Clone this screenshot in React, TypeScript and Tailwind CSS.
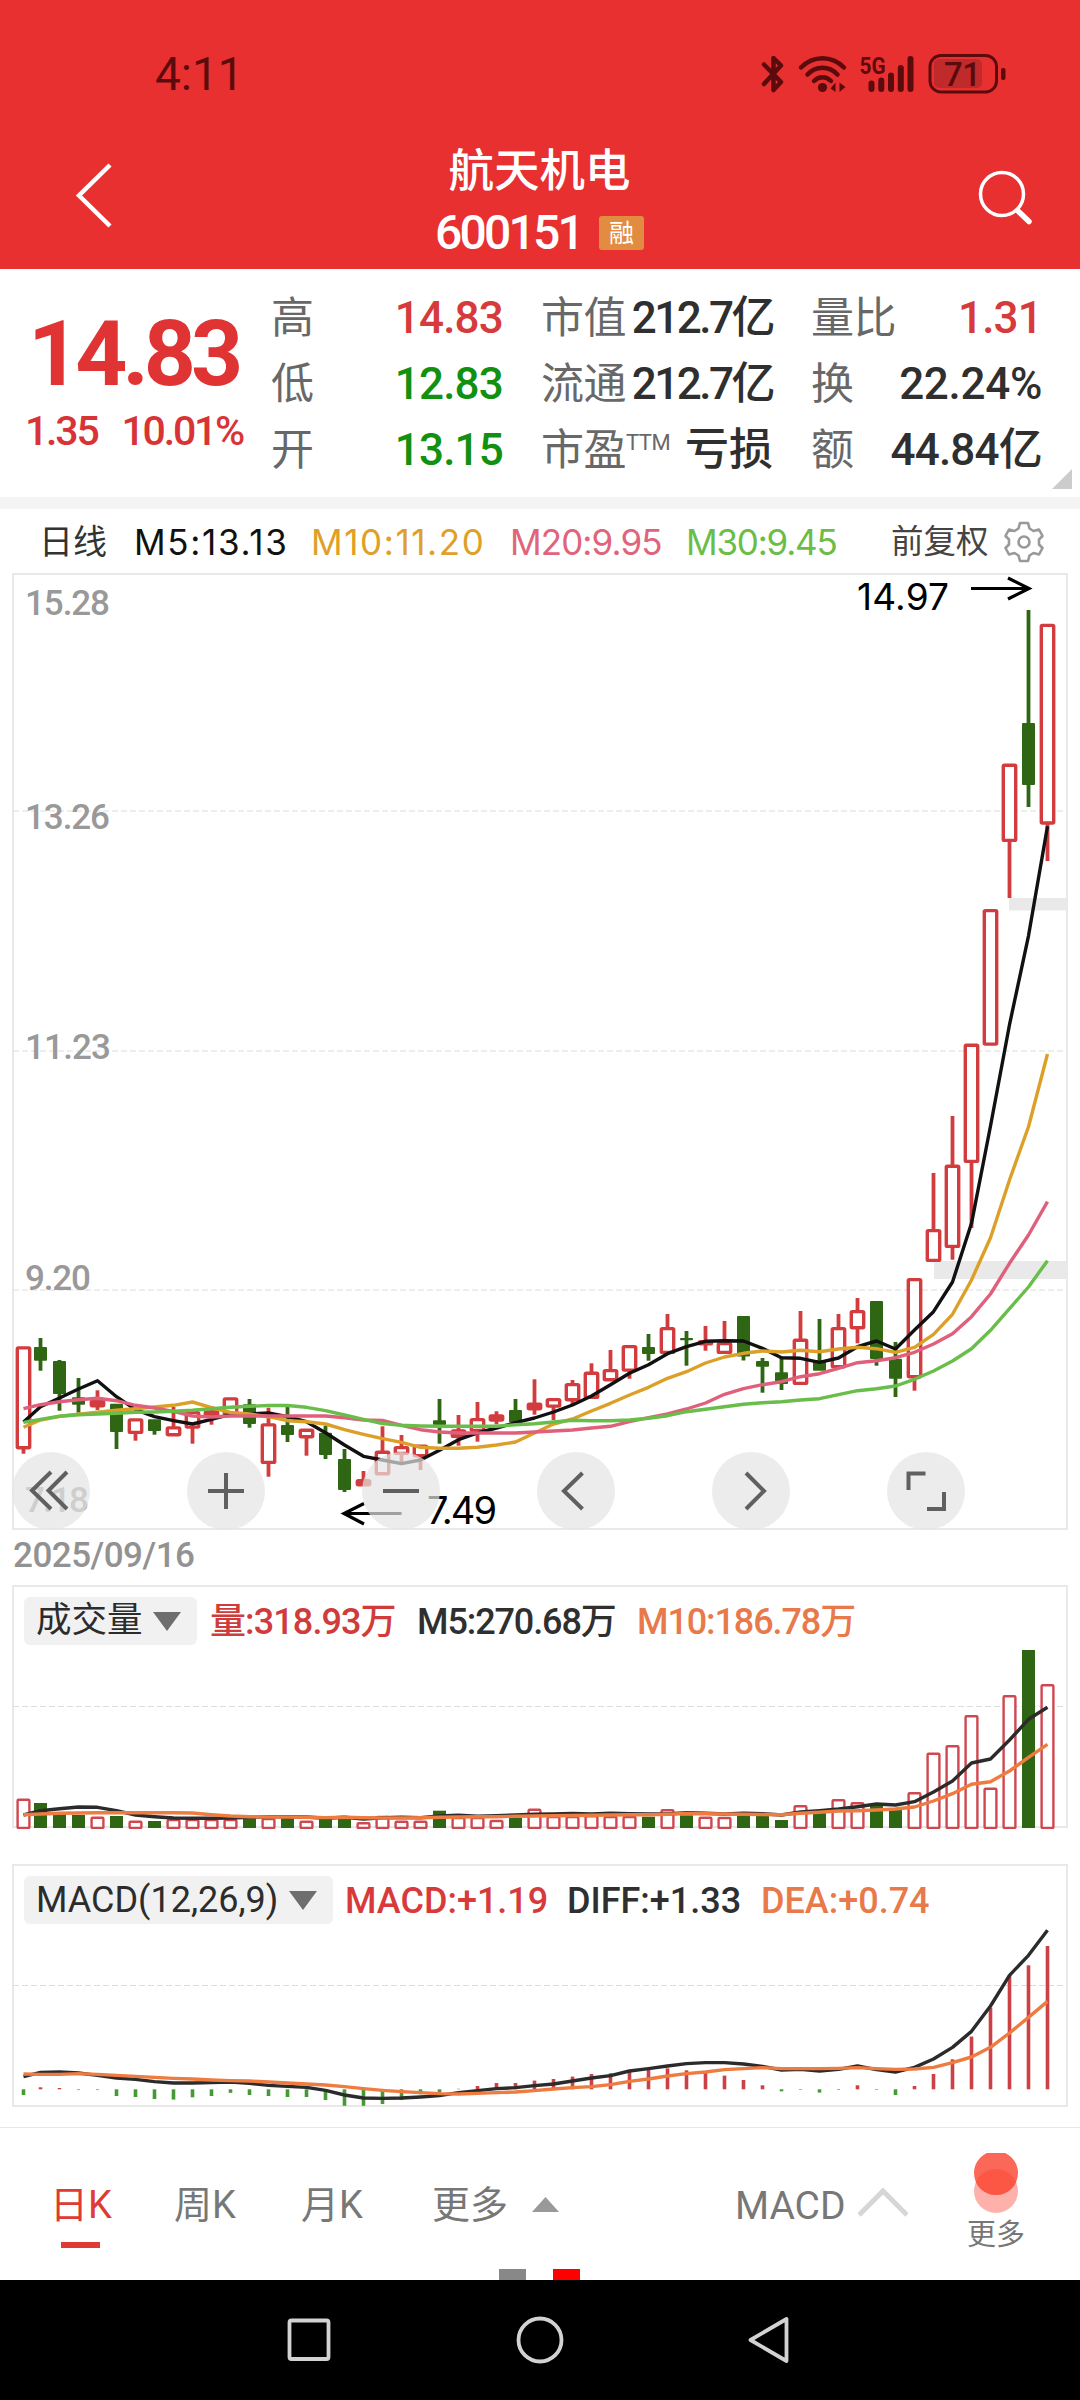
import { cx } from "class-variance-authority";

// [up, bodyTop, bodyBottom, high, low]
type Candle = [number, number, number, number, number];

const candles: Candle[] = [
  [1, 1346.3, 1449.3, 1346.3, 1453.7],
  [0, 1347, 1360.7, 1338, 1370.7],
  [0, 1361, 1394, 1360, 1410.7],
  [0, 1397.3, 1404.7, 1378, 1412.7],
  [1, 1399.7, 1407.3, 1390.3, 1410],
  [0, 1403.7, 1432, 1403.7, 1449],
  [1, 1418.3, 1434, 1418.3, 1440.7],
  [0, 1419.3, 1431, 1419.3, 1434.7],
  [1, 1426.3, 1436.3, 1407, 1436.3],
  [1, 1411, 1428.7, 1411, 1443.7],
  [1, 1410.3, 1418, 1406.3, 1424.7],
  [1, 1397.3, 1415, 1397.3, 1415],
  [0, 1404.3, 1424, 1399, 1427.7],
  [1, 1423.3, 1464, 1407.7, 1476.7],
  [0, 1425, 1435, 1407, 1442],
  [1, 1428.7, 1438.3, 1428.7, 1455.7],
  [0, 1432.7, 1455, 1425.7, 1459],
  [0, 1459, 1490, 1449, 1492],
  [1, 1479, 1486.3, 1471, 1486.3],
  [1, 1450.7, 1475.3, 1426.3, 1475.3],
  [1, 1446, 1455, 1435, 1462],
  [1, 1444.7, 1457.3, 1444.7, 1470],
  [0, 1420.3, 1425, 1399, 1443.7],
  [1, 1429.3, 1438, 1415, 1445.7],
  [1, 1418, 1432, 1402, 1441.7],
  [1, 1414.3, 1421.7, 1411.3, 1424.3],
  [0, 1410, 1422.3, 1399, 1422.3],
  [1, 1402.7, 1410.3, 1379.3, 1414.7],
  [1, 1398, 1407.7, 1398, 1420],
  [1, 1383, 1401.3, 1380, 1405.7],
  [1, 1371.7, 1399, 1363.3, 1399],
  [1, 1369, 1381.3, 1350, 1381.3],
  [1, 1345, 1371.7, 1345, 1378.7],
  [0, 1347, 1354, 1334, 1360.7],
  [1, 1327, 1354, 1314, 1354],
  [0, 1338, 1340.3, 1331, 1365.7],
  [1, 1340, 1345.3, 1326, 1350.7],
  [1, 1342, 1354, 1321, 1354],
  [0, 1316, 1356.5, 1316, 1360.5],
  [0, 1361, 1366.7, 1358, 1392.7],
  [0, 1372.3, 1384, 1356.7, 1390],
  [1, 1338.7, 1385, 1311, 1385],
  [0, 1360, 1370.7, 1319, 1370.7],
  [1, 1327, 1368.3, 1314, 1368.3],
  [1, 1310, 1329.3, 1298, 1343.3],
  [0, 1301, 1359, 1301, 1365.7],
  [0, 1358.7, 1378.7, 1342, 1397],
  [1, 1278, 1378.3, 1278, 1390.7],
  [1, 1229, 1262, 1173, 1262],
  [1, 1164.7, 1248, 1116, 1259.7],
  [1, 1043.7, 1163, 1043.7, 1228],
  [1, 909, 1045.7, 909, 1045.7],
  [1, 763.7, 842, 763.7, 898],
  [0, 723, 785, 610, 807],
  [1, 623.8, 824.6, 623.8, 861],
];

const ma5 = [
  1422, 1406.7, 1398, 1389, 1380.7, 1396.7, 1409.7, 1416.7, 1420.7, 1424, 1419.3, 1414.3, 1414, 1413,
  1416.7, 1421.7, 1432.7, 1445, 1456.3, 1460, 1463.7, 1460, 1450.3, 1439.7, 1433, 1428, 1422.7, 1418,
  1412, 1405, 1396, 1384.7, 1373.3, 1364.7, 1353.7, 1346.7, 1341.3, 1340.7, 1341, 1348.3, 1357.7,
  1358.3, 1362.3, 1358, 1346.7, 1341, 1349, 1330, 1311.7, 1282, 1223.3, 1126, 1024.7, 935.8, 826.2,
];
const ma10 = [
  1427.3, 1420, 1416.3, 1414.3, 1412.3, 1410.3, 1408.7, 1407, 1405.3, 1402, 1407.7, 1412.5, 1414,
  1416.7, 1420.7, 1421.7, 1424, 1429.7, 1434.3, 1438.7, 1442.3, 1447.3, 1448.3, 1448.3, 1447.3, 1445,
  1442, 1433, 1424, 1419, 1411, 1403.3, 1395, 1387.3, 1378.3, 1371.7, 1363, 1357, 1353.3, 1351, 1352,
  1350.3, 1351.7, 1349, 1347.3, 1348.7, 1352.3, 1347.3, 1334.3, 1314.3, 1280, 1237.7, 1180, 1126.7,
  1054,
];
const ma20 = [
  1408.7, 1404.7, 1401.7, 1399.7, 1398.3, 1400.7, 1405.3, 1408, 1411.3, 1416, 1417, 1416, 1416, 1416,
  1416, 1416, 1416, 1417.7, 1420, 1420.5, 1425.3, 1429.7, 1432, 1433, 1433, 1433, 1433, 1432, 1431,
  1430, 1428, 1426.3, 1421.7, 1417.7, 1414, 1409, 1403, 1394.3, 1388.7, 1384.7, 1381.7, 1376.7,
  1373.7, 1368.3, 1362.7, 1360.7, 1357.7, 1352.3, 1344, 1333.7, 1316.7, 1294, 1263.3, 1235, 1201.7,
];
const ma30 = [
  1422.3, 1419.3, 1416.3, 1414.7, 1414, 1413.3, 1412.3, 1412, 1411.3, 1410.3, 1408.7, 1407.3, 1406.3,
  1405.5, 1405.5, 1407.3, 1410.7, 1415, 1419.3, 1423.5, 1425.3, 1426, 1426.3, 1426.3, 1426.3, 1426.3,
  1424.7, 1423.7, 1422, 1420.3, 1420.7, 1420.7, 1420, 1418.3, 1415.7, 1411.7, 1409.3, 1406.7, 1404.3,
  1402.7, 1401.7, 1400, 1398.7, 1394.7, 1390.7, 1388.7, 1386, 1379.3, 1371, 1361, 1348.7, 1330.3,
  1308.7, 1287, 1260.7,
];

// bar tops of the volume chart
const volumes = [
  1798.7, 1803, 1812, 1815, 1816.7, 1816, 1820.7, 1821, 1819, 1819, 1819, 1819, 1818, 1818, 1818,
  1820.7, 1819, 1819, 1822.3, 1816, 1820.7, 1820.7, 1810.7, 1817, 1817, 1820, 1818, 1808.7, 1816,
  1816, 1815.3, 1816, 1816, 1816.7, 1809.3, 1815.3, 1816.7, 1817, 1815.7, 1816, 1820, 1805.3, 1812,
  1799.3, 1802.3, 1805.7, 1809.3, 1792.3, 1752.7, 1745.3, 1715.3, 1787.7, 1695.3, 1650, 1684.3,
];
const volMa5 = [
  1815, 1810.7, 1808.7, 1807, 1807.3, 1810.7, 1815, 1816.7, 1818, 1818.3, 1818.3, 1818, 1817.3, 1816.7,
  1816.7, 1817, 1818.3, 1817.3, 1819, 1817.7, 1817.3, 1817.7, 1816, 1815.3, 1816.3, 1815.7, 1815,
  1814.3, 1814, 1813.5, 1814, 1813.3, 1813.7, 1814, 1814, 1812.7, 1813.3, 1814, 1813.3, 1813.7, 1815,
  1812, 1810.7, 1809, 1806.7, 1804, 1805, 1801.7, 1792, 1781, 1763, 1759, 1740, 1719.3, 1707.3,
];
const volMa10 = [
  1814.7, 1814, 1813.3, 1813, 1812.7, 1812.7, 1812.7, 1812.7, 1812.7, 1813, 1814.7, 1816, 1816.7,
  1817, 1817, 1817.3, 1817.7, 1817.3, 1817.7, 1818, 1818, 1817.7, 1817.3, 1817, 1816.7, 1816.7, 1816.3,
  1816, 1815.7, 1815.5, 1815.3, 1815, 1814.7, 1814.7, 1814.2, 1813.5, 1813.7, 1814, 1814.3, 1814.5,
  1814.7, 1813.3, 1812.3, 1811, 1810.7, 1810, 1809, 1807, 1801, 1793.7, 1784.3, 1781.7, 1771, 1757.3,
  1744.3,
];

// signed heights of the MACD histogram
const histogram = [
  -5.7, 2, 1.3, -0.8, -0.8, -6.7, -7.7, -9.7, -10.3, -8, -6.7, -3.5, -5.7, -6.7, -7.7, -7.7, -10.7,
  -16.5, -16.5, -14.7, -10.7, -5, -3.3, 0.6, 3.3, 6.3, 6.3, 8.7, 10.3, 12.7, 15.3, 16, 18, 19.3, 21,
  19, 16.7, 13.7, 9.3, 4, -2, -0.7, -3.3, -0.7, 4, -0.7, -5.7, 3.3, 15.3, 30, 52.7, 81.7, 114, 124,
  143.3,
];
const diff = [
  680, 667, 666, 669, 676, 684, 688, 695, 699, 699, 698, 696, 700, 706, 709, 712, 721, 735, 744, 745,
  744, 741, 737, 728, 722, 716, 713, 707, 702, 693, 684, 677, 663, 656, 648, 641, 638, 638, 642, 649,
  660, 658, 663, 658, 648, 659, 666, 652, 627, 592, 544, 468, 376, 316, 241,
].map((v) => 1850 + v / 3);
const dea = [
  672, 673, 673, 671, 673, 676, 679, 682, 685, 687, 690, 692, 693, 696, 699, 702, 705, 710, 716, 721,
  725, 728, 731, 732, 730, 728, 726, 722, 717, 713, 710, 704, 694, 687, 678, 671, 666, 659, 656, 653,
  656, 656, 656, 655, 653, 656, 658, 657, 652, 638, 621, 592, 549, 502, 454,
].map((v) => 1850 + v / 3);

const xAt = (i: number) => (i === 0 ? 23.5 : 21.5 + i * 19);
const points = (values: number[]) => values.map((y, i) => `${xAt(i)},${y}`).join(" ");

const UP = "#d23c3e";
const DOWN = "#2f6614";

const Line = ({ values, color, width = 3.4 }: { values: number[]; color: string; width?: number }) => (
  <polyline points={points(values)} fill="none" stroke={color} strokeWidth={width} strokeLinejoin="round" />
);

const GridLine = ({ y }: { y: number }) => (
  <line x1="13" x2="1066" y1={y} y2={y} stroke="#dcdcdc" strokeWidth="1" strokeDasharray="6 3" />
);

const priceLabels = [
  { text: "15.28", y: 615, width: 85 },
  { text: "13.26", y: 829, width: 85 },
  { text: "11.23", y: 1059, width: 86 },
  { text: "9.20", y: 1290, width: 66 },
  { text: "7.18", y: 1512, width: 64 },
];

const CandleChart = () => (
  <svg viewBox="0 573 1080 957" className="block h-[957px] w-full">
    <rect x="13" y="574" width="1054" height="955" fill="none" stroke="#e9e9e9" strokeWidth="2" />
    <GridLine y={811} />
    <GridLine y={1051} />
    <GridLine y={1290} />
    <rect x="1009" y="898" width="59" height="12.5" fill="#e9e9e9" />
    <rect x="934" y="1261" width="134" height="18" fill="#e9e9e9" />
    {priceLabels.map((l) => (
      <text
        key={l.text}
        x="25"
        y={l.y}
        textLength={l.width}
        className="fill-[#999999] font-[Roboto,sans-serif] text-[35px] font-medium"
      >
        {l.text}
      </text>
    ))}
    {candles.map(([up, top, bottom, high, low], i) => {
      const x = xAt(i);
      const color = up ? UP : DOWN;
      return (
        <g key={i} stroke={color}>
          {high < top && <line x1={x} x2={x} y1={high} y2={top + 1} strokeWidth="3.8" />}
          {low > bottom && <line x1={x} x2={x} y1={bottom - 1} y2={low} strokeWidth="3.8" />}
          {up ? (
            <rect
              x={x - 6.2}
              y={top + 1.6}
              width="12.4"
              height={Math.max(bottom - top - 3.2, 1)}
              rx="1"
              fill={bottom - top < 9 ? UP : "#ffffff"}
              strokeWidth="3.4"
            />
          ) : (
            <rect x={x - 6.5} y={top} width="13" height={bottom - top} rx="1" fill={DOWN} stroke="none" />
          )}
        </g>
      );
    })}
    <Line values={ma5} color="#111111" />
    <Line values={ma10} color="#dca028" />
    <Line values={ma20} color="#e0607c" />
    <Line values={ma30} color="#69bd4a" />
    <g fill="none" stroke="#000000" strokeWidth="3.2">
      <path d="M971 588.5H1028M1008 578l21 10.5l-21 10.5" />
      <path d="M401.5 1513.5H346M364 1503.5l-20 10l20 10.5" />
    </g>
    <text x="857" y="609.5" textLength="92" className="font-[Inter,sans-serif] text-[37px]">
      14.97
    </text>
    <text x="427" y="1524" textLength="70" className="font-[Inter,sans-serif] text-[38px]">
      7.49
    </text>
  </svg>
);

const VolumeChart = () => (
  <svg viewBox="0 1585 1080 244" className="block h-[244px] w-full">
    <rect x="13" y="1586" width="1054" height="241" fill="none" stroke="#e9e9e9" strokeWidth="2" />
    <GridLine y={1706.5} />
    {volumes.map((top, i) =>
      candles[i][0] ? (
        <rect
          key={i}
          x={xAt(i) - 5.9}
          y={top + 1}
          width="11.8"
          height={1827 - top}
          rx="1"
          fill="#ffffff"
          stroke="#cf4850"
          strokeWidth="2.4"
        />
      ) : (
        <rect key={i} x={xAt(i) - 6.5} y={top} width="13" height={1828 - top} fill={DOWN} />
      )
    )}
    <Line values={volMa5} color="#2b2b2b" />
    <Line values={volMa10} color="#ee7b40" />
  </svg>
);

const MacdChart = () => (
  <svg viewBox="0 1864 1080 244" className="block h-[244px] w-full">
    <rect x="13" y="1865" width="1054" height="241" fill="none" stroke="#e9e9e9" strokeWidth="2" />
    <GridLine y={1985.5} />
    {histogram.map((v, i) => (
      <rect
        key={i}
        x={xAt(i) - (Math.abs(v) < 1 ? 1.5 : 1.8)}
        y={v > 0 ? 2089.3 - v : 2089.3}
        width={Math.abs(v) < 1 ? 3 : 3.6}
        height={Math.abs(v)}
        fill={Math.abs(v) < 1 ? "#909090" : v > 0 ? "#cc4146" : "#469a35"}
      />
    ))}
    <Line values={diff} color="#2b2b2b" />
    <Line values={dea} color="#ee7b40" />
  </svg>
);

const chartButtons = [
  "M39 20L20 38.500L39 57M55 20L36.500 38.500L55 57",
  "M21 39H57M39 21V57",
  "M21 39H57",
  "M45.5 21L27 39L45.5 57",
  "M34 21L52 39L34 57",
  "M21.5 38V21.5H38.5M57 40V57H40",
];

const ChartButtons = () => (
  <div className="absolute bottom-0 left-[12px] flex gap-[97px]">
    {chartButtons.map((d) => (
      <button key={d} className="h-[78px] w-[78px] rounded-full bg-[#e4e4e4b3]">
        <svg viewBox="0 0 78 78" fill="none" stroke="#606060" strokeWidth="4">
          <path d={d} />
        </svg>
      </button>
    ))}
  </div>
);

const StatusBar = () => (
  <div className="flex h-[147px] items-center justify-between pl-[155px] pr-[74px] text-[#5c0b0d]">
    <span className="text-[46px] leading-none">4:11</span>
    <svg width="246" height="42" viewBox="760 52 246 42" fill="none" stroke="currentColor">
      <path d="M764 63.500L781 81l-7.500 8V57l7.500 7.500L764 83" strokeWidth="4.500" strokeLinejoin="round" strokeLinecap="round" />
      <g strokeWidth="4.500" strokeLinecap="round">
        <path d="M801 66.500C813 54 832 54 844 66.500" />
        <path d="M807.500 73.500C816 64.500 829 64.500 837.500 73.500" />
        <path d="M814 80C819 75 826 75 831 80" />
      </g>
      <circle cx="822.500" cy="86.500" r="4.600" fill="currentColor" stroke="none" />
      <path d="M835.500 81.500V91L830.500 87.500zM839.500 91V81.500L845.500 86z" fill="currentColor" stroke="none" />
      <text x="859.500" y="73" textLength="26" lengthAdjust="spacingAndGlyphs" fill="currentColor" stroke="none" className="font-[Roboto,sans-serif] text-[24px] font-bold">
        5G
      </text>
      <path d="M871.500 82.500V88M881.300 79.500V88M891 74.500V88M900.800 67V88M910.500 58V88" strokeWidth="6" strokeLinecap="round" />
      <rect x="934" y="58" width="48" height="29" rx="5" fill="#c12a2b" stroke="none" />
      <rect x="930" y="54.500" width="66.500" height="36.500" rx="11" strokeWidth="3" />
      <rect x="1001" y="67" width="4.500" height="12" rx="2" fill="currentColor" stroke="none" />
      <text x="944" y="84.500" textLength="37" fill="currentColor" stroke="none" className="font-[Roboto,sans-serif] text-[33px] font-medium">
        71
      </text>
    </svg>
  </div>
);

const Header = () => (
  <header className="h-[269px] bg-[#e83030]">
    <StatusBar />
    <div className="flex h-[122px] justify-between pl-[74px] pr-[45px] text-white">
      <svg width="40" height="96" viewBox="0 0 40 96" fill="none" stroke="currentColor" strokeWidth="4.5">
        <path d="M36 18L5 48.500L36 79" />
      </svg>
      <div className="flex flex-col items-center pr-[10px]">
        <h1 className="text-[45.500px] font-medium leading-[50px]">航天机电</h1>
        <div className="mt-[11px] flex items-center gap-[17px]">
          <span className="text-[48px] font-medium leading-[50px] tracking-[-2.800px]">600151</span>
          <span className="flex h-[34px] w-[45px] items-center justify-center rounded-[3px] bg-[#e28c41] text-[25px] leading-none">融</span>
        </div>
      </div>
      <svg width="60" height="96" viewBox="975 147 60 96" fill="none" stroke="currentColor" strokeLinecap="round">
        <circle cx="1002" cy="194" r="21.500" strokeWidth="3.500" />
        <path d="M1018 211l11 10.500" strokeWidth="5.500" />
      </svg>
    </div>
  </header>
);

type Stat = { label: string; sup?: string; value: string; className?: string };

const stats: Stat[][] = [
  [
    { label: "高", value: "14.83", className: "tracking-[-0.800px] text-[#d63a3a]" },
    { label: "低", value: "12.83", className: "tracking-[-0.800px] text-[#12900f]" },
    { label: "开", value: "13.15", className: "tracking-[-0.800px] text-[#12900f]" },
  ],
  [
    { label: "市值", value: "212.7亿", className: "tracking-[-2.500px]" },
    { label: "流通", value: "212.7亿", className: "tracking-[-2.500px]" },
    { label: "市盈", sup: "TTM", value: "亏损" },
  ],
  [
    { label: "量比", value: "1.31", className: "tracking-[-0.800px] text-[#d63a3a]" },
    { label: "换", value: "22.24%", className: "tracking-[-0.300px]" },
    { label: "额", value: "44.84亿", className: "tracking-[-0.800px]" },
  ],
];

const columnWidths = ["w-[232px]", "w-[232px]", "w-[231px]"];

const Quote = () => (
  <section className="relative flex h-[228px] bg-white">
    <div className="w-[271px] text-[#d83436]">
      <div className="mt-[40px] pl-[28px] text-[91px] font-bold leading-[90px] tracking-[-5px] text-[#e03333]">14.83</div>
      <div className="mt-[9px] flex gap-[24px] pl-[25px] text-[41px] font-medium leading-[46px] tracking-[-2.200px]">
        <span>1.35</span>
        <span>10.01%</span>
      </div>
    </div>
    <div className="flex gap-[38px] pt-[16px]">
      {stats.map((column, i) => (
        <div key={i} className={columnWidths[i]}>
          {column.map((s) => (
            <div key={s.label} className="flex h-[66px] items-center justify-between whitespace-nowrap">
              <span className="flex text-[43px] leading-none tracking-[-0.500px] text-[#686868]">
                {s.label}
                {s.sup && <sup className="top-0 mt-[3px] text-[22px] leading-none">{s.sup}</sup>}
              </span>
              <span className={cx("text-[44px] font-medium leading-none text-[#2f2f2f]", s.className)}>
                {s.value}
              </span>
            </div>
          ))}
        </div>
      ))}
    </div>
    <svg className="absolute right-[8px] bottom-[8px] h-[20px] w-[20px]" viewBox="0 0 20 20">
      <path d="M20 0V20H0z" fill="#cccccc" />
    </svg>
  </section>
);

const Gear = () => (
  <svg width="40" height="42" viewBox="-20 -21 40 42" fill="none" stroke="#999999" strokeWidth="2.6" strokeLinejoin="round">
    <path d="M-4 -19H4L5.500 -13.500L9.500 -11L15 -12.500L18.500 -6L15 -2.500V2.500L18.500 6L15 12.500L9.500 11L5.500 13.500L4 19H-4L-5.500 13.500L-9.500 11L-15 12.500L-18.500 6L-15 2.500V-2.500L-18.500 -6L-15 -12.500L-9.500 -11L-5.500 -13.500Z" />
    <circle r="5.500" />
  </svg>
);

const Legend = () => (
  <div className="flex h-[66px] items-center whitespace-nowrap pl-[39px] font-[Inter,'Noto_Sans_CJK_SC',sans-serif] text-[35px] leading-none">
    <span className="w-[95px] text-[34px] text-[#333333]">日线</span>
    <span className="w-[177px] tracking-[1.700px] text-[#111111]">M5:13.13</span>
    <span className="w-[199px] tracking-[1.600px] text-[#dfa027]">M10:11.20</span>
    <span className="w-[176px] tracking-[-0.900px] text-[#e0647c]">M20:9.95</span>
    <span className="w-[205px] tracking-[-1.200px] text-[#6bbd48]">M30:9.45</span>
    <span className="w-[113px] text-[32.500px] text-[#444444]">前复权</span>
    <Gear />
  </div>
);

const Triangle = () => (
  <svg width="28" height="19" viewBox="0 0 28 19">
    <path d="M0 0H28L14 19z" fill="#6e6e6e" />
  </svg>
);

const Picker = ({ label }: { label: string }) => (
  <button className="flex h-[48px] items-center justify-between rounded-[6px] bg-[#f1f1f1] pl-[12px] pr-[16px]">
    {label}
    <Triangle />
  </button>
);

const tabs = [
  { label: "日K", width: "w-[124px]", active: true },
  { label: "周K", width: "w-[127px]" },
  { label: "月K", width: "w-[131px]" },
];

const TabBar = () => (
  <nav className="relative flex h-[153px] border-t border-[#e8e8e8] bg-white pl-[50px] text-[38px] leading-none text-[#777777]">
    {tabs.map((tab) => (
      <div key={tab.label} className={cx("relative pt-[58px]", tab.width, tab.active && "text-[#df3a34]")}>
        {tab.label}
        {tab.active && <div className="absolute top-[114px] left-[11px] h-[6px] w-[39px] bg-[#df3a34]" />}
      </div>
    ))}
    <div className="flex w-[303px] gap-[24px] pt-[58px]">
      更多
      <svg width="27" height="15" viewBox="0 0 27 15" className="mt-[11px]">
        <path d="M13.500 0L27 15H0z" fill="#999999" />
      </svg>
    </div>
    <div className="flex w-[232px] gap-[12px] pt-[59px]">
      <span className="text-[39px]">MACD</span>
      <svg width="50" height="30" viewBox="0 0 50 30" fill="none" stroke="#d6d6d6" strokeWidth="5" className="mt-[1px]">
        <path d="M1 27L25 3L49 27" />
      </svg>
    </div>
    <div className="flex flex-col items-center pt-[25px] text-[29px]">
      <svg width="44" height="61" viewBox="0 0 44 61">
        <circle cx="22" cy="38" r="22" fill="#fdb1aa" />
        <circle cx="22" cy="20" r="22" fill="#fb6858" />
        <path d="M1.900 29A22 22 0 0 1 42.100 29A22 22 0 0 1 1.900 29" fill="#fc5745" />
      </svg>
      <span className="mt-[7px]">更多</span>
    </div>
    <div className="absolute bottom-0 left-[499px] flex gap-[27px]">
      <i className="h-[11px] w-[27px] bg-[#888888]" />
      <i className="h-[11px] w-[27px] bg-[#ff0000]" />
    </div>
  </nav>
);

const SystemNav = () => (
  <div className="h-[120px] bg-black">
    <svg viewBox="0 2280 1080 120" fill="none" stroke="#d2d2d2" strokeWidth="3.800" strokeLinejoin="round">
      <rect x="289.500" y="2320.500" width="39" height="38.500" rx="2" />
      <circle cx="540" cy="2340" r="21.500" />
      <path d="M786.500 2319V2361L750.500 2340z" />
    </svg>
  </div>
);

export default function App() {
  return (
    <div className="h-[2400px] w-[1080px] overflow-hidden bg-white font-[Roboto,'Noto_Sans_CJK_SC',sans-serif]">
      <Header />
      <Quote />
      <div className="h-[12px] bg-[#f4f4f4]" />
      <div className="h-[64px]">
        <Legend />
      </div>
      <div className="relative">
        <CandleChart />
        <ChartButtons />
      </div>
      <div className="h-[55px] pt-[6px] pl-[13px] text-[35px] font-medium leading-[40px] tracking-[-0.5px] text-[#929292]">
        2025/09/16
      </div>
      <section className="relative h-[279px] text-[36px] font-medium leading-none">
        <VolumeChart />
        <div className="absolute top-[12px] left-[24px] flex items-center whitespace-nowrap">
          <div className="mr-[13px] grid w-[173px] text-[35.500px] font-normal text-[#2c2c2c]">
            <Picker label="成交量" />
          </div>
          <span className="w-[207px] pt-px tracking-[-0.900px] text-[#d03b3b]">量:318.93万</span>
          <span className="w-[220px] pt-px tracking-[-1.100px] text-[#2f2f2f]">M5:270.68万</span>
          <span className="pt-px tracking-[-1.100px] text-[#e8794a]">M10:186.78万</span>
        </div>
      </section>
      <section className="relative h-[263px] text-[36px] leading-none">
        <MacdChart />
        <div className="absolute top-[12px] left-[24px] flex items-center whitespace-nowrap">
          <div className="mr-[12px] grid w-[309px] text-[#2c2c2c]">
            <Picker label="MACD(12,26,9)" />
          </div>
          <span className="w-[222px] pt-px font-medium text-[#d83a3c]">MACD:+1.19</span>
          <span className="w-[194px] pt-px font-medium text-[#2f2f2f]">DIFF:+1.33</span>
          <span className="pt-px font-medium text-[#e8794a]">DEA:+0.74</span>
        </div>
      </section>
      <TabBar />
      <SystemNav />
    </div>
  );
}
